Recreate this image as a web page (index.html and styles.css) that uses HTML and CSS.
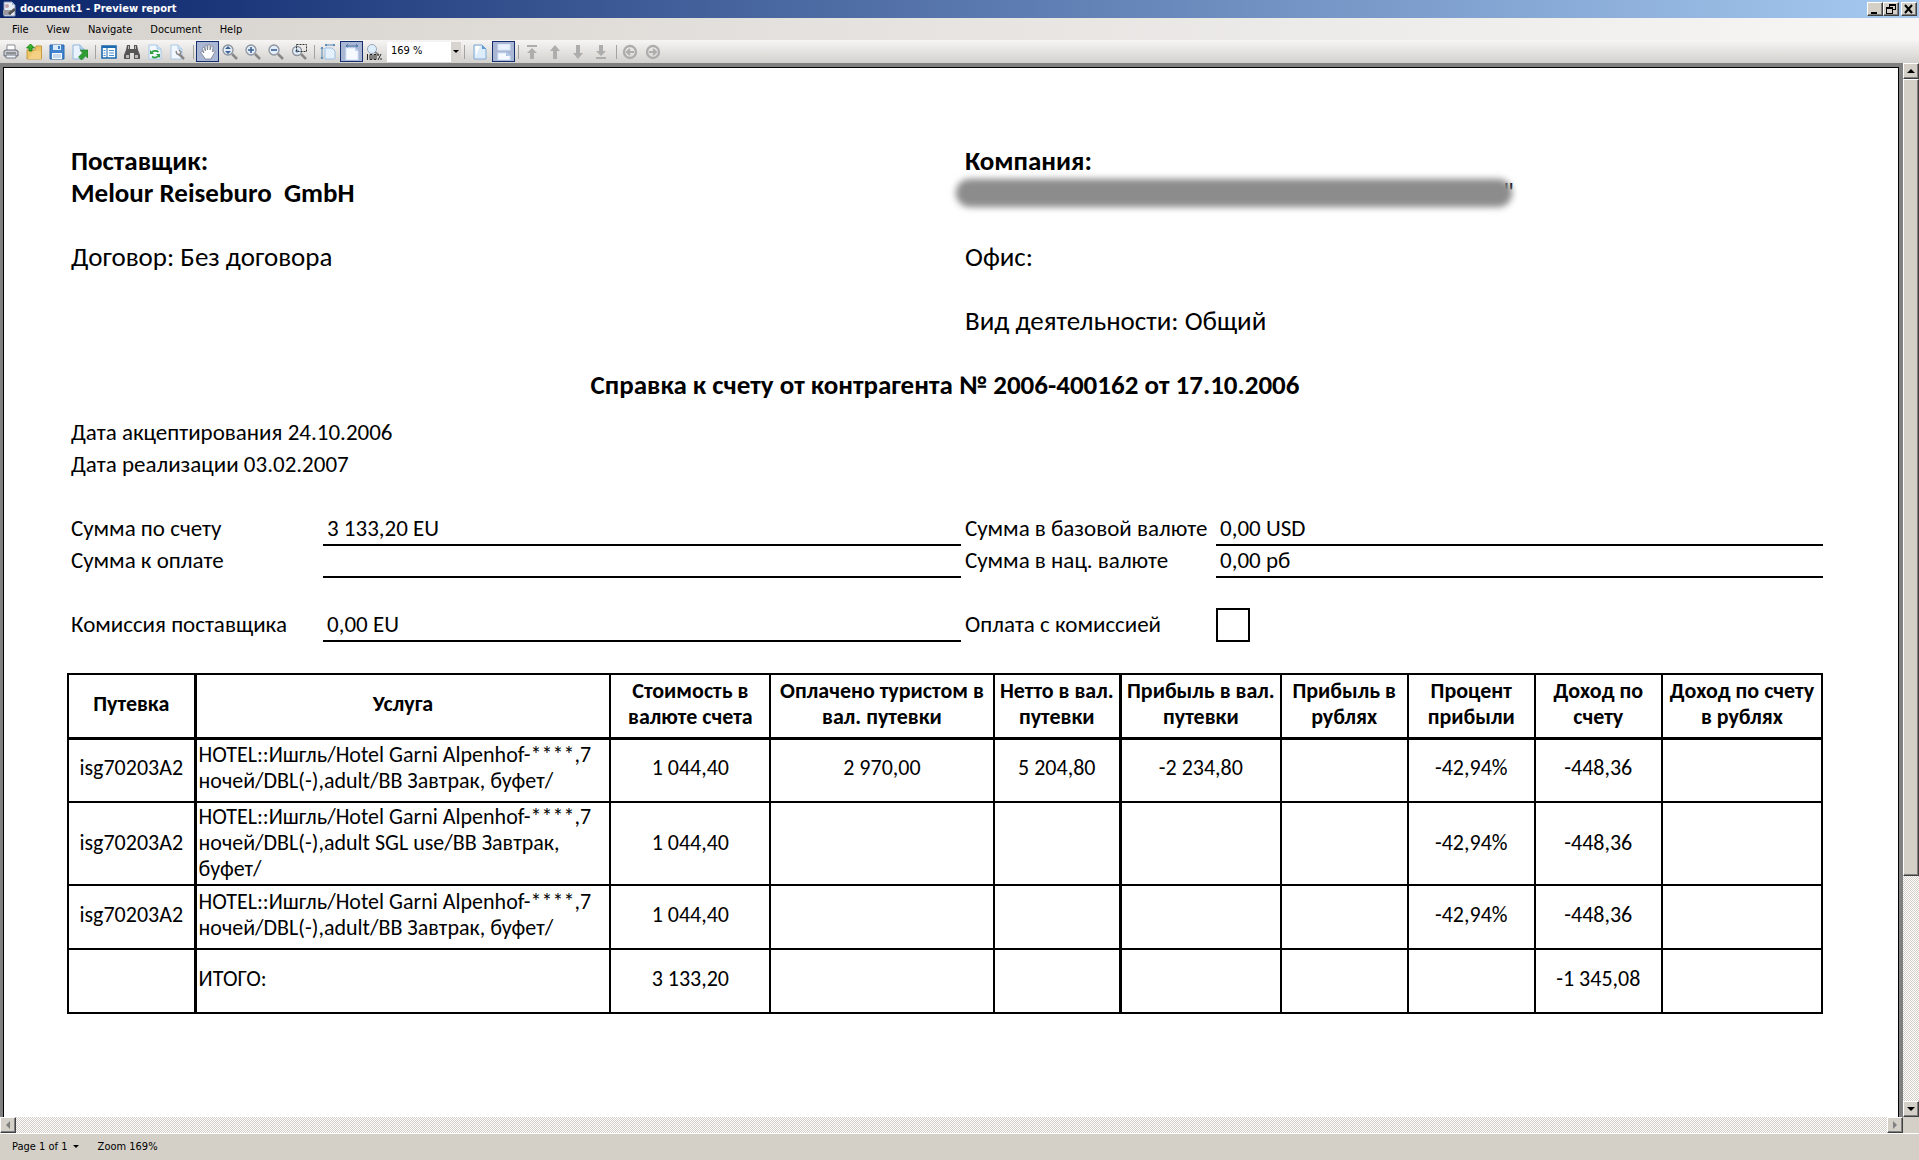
FILE: index.html
```html
<!DOCTYPE html>
<html lang="ru">
<head>
<meta charset="utf-8">
<title>document1 - Preview report</title>
<link rel="stylesheet" href="styles.css">
</head>
<body>
<header class="titlebar">
  <svg class="icon" viewBox="0 0 16 16"><path d="M2 1h8l3 3v11H2z" fill="#e8edf5" stroke="#8b98b8"/><path d="M10 1v3h3z" fill="#9fb3d6"/><path d="M1 9h8v5H1z" fill="#9a9aa0"/><path d="M6 12l6-5 2 2-6 5z" fill="#555"/><circle cx="5" cy="5" r="2" fill="#c5a0a8"/></svg>
  <h1 class="titlebar-text">document1 - Preview report</h1>
  <div class="window-buttons">
    <button class="bevel win-btn" aria-label="Minimize"><svg viewBox="0 0 12 10"><path d="M2 8h6v2H2z"/></svg></button>
    <button class="bevel win-btn" aria-label="Restore"><svg viewBox="0 0 12 10"><path d="M4 0h7v6H8v4H1V3h3zM5 2v1h3v2h2V2zM2 5v4h5V5z" fill-rule="evenodd"/></svg></button>
    <button class="bevel win-btn win-close" aria-label="Close"><svg viewBox="0 0 12 10"><path d="M2 1l7 8M9 1L2 9" stroke="#000" stroke-width="2"/></svg></button>
  </div>
</header>
<nav class="menubar">
  <button class="menu">File</button>
  <button class="menu">View</button>
  <button class="menu">Navigate</button>
  <button class="menu">Document</button>
  <button class="menu">Help</button>
</nav>
<div class="toolbar" role="toolbar">
  <button class="tool" aria-label="Print"><svg viewBox="0 0 16 16"><path d="M4 1h8v6H4z" fill="#fff" stroke="#8b8f98"/><path d="M1 7l2-1h10l2 1v5H1z" fill="#c9ccd2" stroke="#666b76"/><path d="M3 11h10v3H3z" fill="#eef1f6" stroke="#777c88"/><path d="M3 9h10" stroke="#555"/></svg></button>
  <button class="tool" aria-label="Open"><svg viewBox="0 0 16 16"><path d="M1 6h8l1-4h5.500v13H1z" fill="#ecc46a" stroke="#c99a3a"/><path d="M2 15L8 7h7v8z" fill="#f3d084"/><path d="M4.500 0l4 4H6v3H3V4H.5z" fill="#35b32a" stroke="#15760f" stroke-width=".8"/></svg></button>
  <button class="tool" aria-label="Save"><svg viewBox="0 0 16 16"><path d="M1 1h14v14H1z" fill="#3f83cf" stroke="#2a67ad"/><path d="M4 1h8v5H4z" fill="#dcebfa"/><path d="M9 2h2v3H9z" fill="#3f83cf"/><path d="M3 9h10v6H3z" fill="#f4f8fd"/><path d="M4 11h8M4 13h8" stroke="#9ab9dc"/></svg></button>
  <button class="tool" aria-label="Export"><svg viewBox="0 0 16 16"><path d="M1 1h7l4 4v10H1z" fill="#eaf3fd" stroke="#8fb6de"/><path d="M8 1v4h4" fill="#bcd7f2" stroke="#8fb6de"/><path d="M16 6v8l-2.500-2-4 4-3-3 4-4-2.500-3z" fill="#2f9e35" stroke="#1b7420" stroke-width=".6"/></svg></button>
  <span class="sep"></span>
  <button class="tool" aria-label="Outline"><svg viewBox="0 0 16 16"><path d="M1 2h14v12H1z" fill="#fff" stroke="#1d6aaf" stroke-width="1.6"/><path d="M1 2h14v2H1z" fill="#1d6aaf"/><path d="M6 3v11" stroke="#1d6aaf"/><path d="M2.500 6.500h2m-2 2.500h2m-2 2.500h2M8 6.500h5M8 9h5m-5 2.500h5" stroke="#4a90d0"/></svg></button>
  <button class="tool" aria-label="Search"><svg viewBox="0 0 16 16"><path d="M3 1h3v4h4V1h3l1 5 2 5v4h-6V9H6v6H0v-4l2-5z" fill="#555"/><path d="M4 2h1v3H4zm7 0h1v3h-1zM2 11h3v3H2zm9 0h3v3h-3z" fill="#bbb"/></svg></button>
  <button class="tool" aria-label="Refresh"><svg viewBox="0 0 16 16"><path d="M2 1h8l4 4v10H2z" fill="#f2f8fe" stroke="#a8c8e6"/><path d="M10 1v4h4" fill="#cfe3f6" stroke="#a8c8e6"/><path d="M4.500 9a4 3 0 0 1 7-1M12 11a4 3 0 0 1-7 1.500" fill="none" stroke="#2da042" stroke-width="1.700"/><path d="M3 6v4h4zm10 8v-4H9z" fill="#2da042"/></svg></button>
  <button class="tool" aria-label="Page settings"><svg viewBox="0 0 16 16"><path d="M1 1h7l4 4v10H1z" fill="#f2f8fe" stroke="#a8c8e6"/><path d="M8 1v4h4" fill="#cfe3f6" stroke="#a8c8e6"/><path d="M9 10l5 5" stroke="#888" stroke-width="2.500"/><path d="M6 7l1 3 3 1 1-3-2-2" fill="none" stroke="#888" stroke-width="1.500"/></svg></button>
  <span class="sep"></span>
  <button class="tool pressed" aria-label="Hand" aria-pressed="true"><svg viewBox="0 0 16 16"><path d="M4 9L2.500 4.500c0-1.500 1.500-1.500 2 0L5.500 7 5 2c0-1.500 2-1.500 2 0l.5 4L8 1.500C8 0 10 0 10 1.500V6l1-3.500c.5-1.500 2-1 2 .5l-.5 5 1-1c1-1 2 0 1.500 1L12 13l-1 2H5l-1-2-3-4c-.5-1.500 1-2 2-1z" fill="#fff" stroke="#777c8c" stroke-width=".8"/></svg></button>
  <button class="tool" aria-label="Dynamic zoom"><svg viewBox="0 0 16 16"><path d="M10 10l5 5" stroke="#888" stroke-width="2.500"/><circle cx="6" cy="6" r="5" fill="#e3edf8" stroke="#8c939e" stroke-width="1.300"/><path d="M6 2l3 3H3zm0 8l3-3H3z" fill="#3d6190"/></svg></button>
  <button class="tool" aria-label="Zoom in"><svg viewBox="0 0 16 16"><path d="M10 10l5 5" stroke="#888" stroke-width="2.500"/><circle cx="6" cy="6" r="5" fill="#e3edf8" stroke="#8c939e" stroke-width="1.300"/><path d="M3 6h6M6 3v6" stroke="#3d6190" stroke-width="1.600"/></svg></button>
  <button class="tool" aria-label="Zoom out"><svg viewBox="0 0 16 16"><path d="M10 10l5 5" stroke="#888" stroke-width="2.500"/><circle cx="6" cy="6" r="5" fill="#e3edf8" stroke="#8c939e" stroke-width="1.300"/><path d="M3 6h6" stroke="#3d6190" stroke-width="1.600"/></svg></button>
  <button class="tool" aria-label="Marquee zoom"><svg viewBox="0 0 16 16"><path d="M10 10l5 5" stroke="#888" stroke-width="2.500"/><circle cx="6" cy="7" r="4.500" fill="#e3edf8" stroke="#8c939e" stroke-width="1.300"/><path d="M4 7h4M6 5v4" stroke="#6d89b0"/><path d="M5.500.5h10v7h-10z" fill="none" stroke="#333" stroke-dasharray="2 1"/></svg></button>
  <span class="sep"></span>
  <button class="tool" aria-label="Whole page"><svg viewBox="0 0 16 16"><path d="M5 4h7l3 3v8H5z" fill="#e4f0fb" stroke="#9dbfe2"/><path d="M2 3v12M5 1h10M1 5l1-2 1 2M1 13l1 2 1-2M7 0L5 1l2 1M13 0l2 1-2 1" fill="none" stroke="#5286b4"/></svg></button>
  <button class="tool pressed" aria-label="Page width" aria-pressed="true"><svg viewBox="0 0 16 16"><path d="M2 4h9l3 3v9H2z" fill="#f6faff" stroke="#d3e3f5"/><path d="M11 4v3h3z" fill="#bcd3ee"/><path d="M2 2h12M4 0L2 2l2 1M12 0l2 2-2 1" fill="none" stroke="#4a72a8"/></svg></button>
  <button class="tool" aria-label="Actual size"><svg viewBox="0 0 16 16"><circle cx="6" cy="5" r="4.500" fill="#dfeefb" stroke="#97a8ba"/><path d="M9 8l4 3" stroke="#888" stroke-width="2"/><path d="M1.500 10v6M4 10.500h2v5H4zM8 10.500h2v5H8zM15 10l-3 6M12 10v2m3 2v2" fill="none" stroke="#222"/></svg></button>
  <div class="combo"><input class="combo-input" aria-label="Zoom" value="169 %"><button class="combo-arrow" aria-label="Zoom levels"><i class="tri down"></i></button></div>
  <span class="sep wide"></span>
  <button class="tool" aria-label="Single page"><svg viewBox="0 0 16 16"><path d="M2 1h8l4 4v10H2z" fill="#dcecfb" stroke="#7fa9d3"/><path d="M3 2h5L4 12z" fill="#fff"/><path d="M10 1v4h4z" fill="#5f9ad6"/></svg></button>
  <button class="tool pressed" aria-label="Continuous" aria-pressed="true"><svg viewBox="0 0 16 16"><path d="M2 0h12v6H2z" fill="#e9f2fc" stroke="#d3e3f5"/><path d="M2 9h8l4 3v4H2z" fill="#f6faff" stroke="#d3e3f5"/><path d="M10 9v3h4z" fill="#a9c6e8"/></svg></button>
  <span class="sep"></span>
  <button class="tool" disabled aria-label="First page"><svg viewBox="0 0 16 16" fill="#adadad"><path d="M3 1h10v2H3zM8 4l5 5h-3v6H6V9H3z"/></svg></button>
  <button class="tool" disabled aria-label="Previous page"><svg viewBox="0 0 16 16" fill="#adadad"><path d="M8 1l5 6h-3v8H6V7H3z"/></svg></button>
  <button class="tool" disabled aria-label="Next page"><svg viewBox="0 0 16 16" fill="#adadad"><path d="M8 15l5-6h-3V1H6v8H3z"/></svg></button>
  <button class="tool" disabled aria-label="Last page"><svg viewBox="0 0 16 16" fill="#adadad"><path d="M3 13h10v2H3zM8 12l5-5h-3V1H6v6H3z"/></svg></button>
  <span class="sep"></span>
  <button class="tool" disabled aria-label="Back"><svg viewBox="0 0 16 16"><circle cx="8" cy="8" r="6" fill="none" stroke="#adadad" stroke-width="2.400"/><path d="M12 8H5m3-3L5 8l3 3" fill="none" stroke="#adadad" stroke-width="2"/></svg></button>
  <button class="tool" disabled aria-label="Forward"><svg viewBox="0 0 16 16"><circle cx="8" cy="8" r="6" fill="none" stroke="#adadad" stroke-width="2.400"/><path d="M4 8h7M8 5l3 3-3 3" fill="none" stroke="#adadad" stroke-width="2"/></svg></button>
</div>
<div class="viewer">
  <main class="sheet">
    <section class="parties">
      <div class="party">
        <p class="strong">Поставщик:</p>
        <p class="strong">Melour Reiseburo&nbsp; GmbH</p>
        <p class="spaced">Договор: Без договора</p>
      </div>
      <div class="party">
        <p class="strong">Компания:</p>
        <p class="redacted"><span class="redaction"></span>"</p>
        <p class="spaced">Офис:</p>
        <p class="spaced">Вид деятельности: Общий</p>
      </div>
    </section>
    <h2 class="report-title">Справка к счету от контрагента № 2006-400162 от 17.10.2006</h2>
    <section class="dates">
      <p>Дата акцептирования 24.10.2006</p>
      <p>Дата реализации 03.02.2007</p>
    </section>
    <section class="sums totals">
      <span>Сумма по счету</span><span class="value">3 133,20 EU</span>
      <span>Сумма в базовой валюте</span><span class="value">0,00 USD</span>
      <span>Сумма к оплате</span><span class="value"></span>
      <span>Сумма в нац. валюте</span><span class="value">0,00 рб</span>
    </section>
    <section class="sums">
      <span>Комиссия поставщика</span><span class="value">0,00 EU</span>
      <label for="with-fee">Оплата с комиссией</label><input class="check" type="checkbox" id="with-fee">
    </section>
    <table class="services">
      <colgroup><col class="c-md"><col class="c-xl"><col class="c-lg"><col class="c-paid"><col class="c-md"><col class="c-lg"><col class="c-md"><col class="c-md"><col class="c-md"><col class="c-lg"></colgroup>
      <thead>
        <tr><th>Путевка</th><th>Услуга</th><th>Стоимость в валюте счета</th><th>Оплачено туристом в вал. путевки</th><th>Нетто в вал. путевки</th><th>Прибыль в вал. путевки</th><th>Прибыль в рублях</th><th>Процент прибыли</th><th>Доход по счету</th><th>Доход по счету<br>в рублях</th></tr>
      </thead>
      <tbody>
        <tr><td>isg70203A2</td><td class="service">HOTEL::Ишгль/Hotel Garni Alpenhof-****,7<br>ночей/DBL(-),adult/BB Завтрак, буфет/</td><td>1 044,40</td><td>2 970,00</td><td>5 204,80</td><td>-2 234,80</td><td></td><td>-42,94%</td><td>-448,36</td><td></td></tr>
        <tr class="tall"><td>isg70203A2</td><td class="service">HOTEL::Ишгль/Hotel Garni Alpenhof-****,7<br>ночей/DBL(-),adult SGL use/BB Завтрак,<br>буфет/</td><td>1 044,40</td><td></td><td></td><td></td><td></td><td>-42,94%</td><td>-448,36</td><td></td></tr>
        <tr><td>isg70203A2</td><td class="service">HOTEL::Ишгль/Hotel Garni Alpenhof-****,7<br>ночей/DBL(-),adult/BB Завтрак, буфет/</td><td>1 044,40</td><td></td><td></td><td></td><td></td><td>-42,94%</td><td>-448,36</td><td></td></tr>
        <tr><td></td><td class="service">ИТОГО:</td><td>3 133,20</td><td></td><td></td><td></td><td></td><td></td><td>-1 345,08</td><td></td></tr>
      </tbody>
    </table>
  </main>
  <div class="scroll vertical">
    <button class="bevel scroll-btn" aria-label="Scroll up"><i class="tri up"></i></button>
    <div class="track"><div class="bevel thumb"></div></div>
    <button class="bevel scroll-btn" aria-label="Scroll down"><i class="tri down"></i></button>
  </div>
  <div class="scroll horizontal">
    <button class="bevel scroll-btn" disabled aria-label="Scroll left"><i class="tri left"></i></button>
    <div class="track"></div>
    <button class="bevel scroll-btn" disabled aria-label="Scroll right"><i class="tri right"></i></button>
  </div>
</div>
<footer class="statusbar">
  <button class="page-picker">Page 1 of 1 <i class="tri down"></i></button>
  <span>Zoom 169%</span>
</footer>
</body>
</html>
```
FILE: styles.css
```css
* { box-sizing: border-box; }

body {
  margin: 0;
  min-height: 100vh;
  display: flex;
  flex-direction: column;
  background: #d4d0c8;
  color: #000;
  font: 11px/14px Tahoma, "DejaVu Sans Condensed", sans-serif;
}

h1, h2, p { margin: 0; font-size: inherit; }

button {
  margin: 0;
  padding: 0;
  border: 0;
  background: none;
  color: inherit;
  font: inherit;
}

svg { display: block; }

/* Title bar */
.titlebar {
  display: flex;
  align-items: center;
  height: 18px;
  padding: 0 2px;
  background: linear-gradient(90deg, #0a246a, #a6caf0);
  color: #fff;
}
.icon { width: 16px; height: 16px; margin-right: 2px; }
.titlebar-text { flex: 1; font-size: 11px; font-weight: bold; }
.window-buttons { display: flex; }
.bevel {
  background: #d4d0c8;
  border: 1px solid;
  border-color: #fff #404040 #404040 #fff;
  box-shadow: inset -1px -1px #808080;
}
.win-btn { width: 16px; height: 14px; padding: 1px; }
.win-btn svg { width: 12px; height: 10px; }
.win-close { margin-left: 2px; }

/* Menus */
.menubar {
  display: flex;
  align-items: center;
  gap: 18px;
  height: 22px;
  padding: 2px 12px 0;
  background: linear-gradient(90deg, #d6d2cd, #f7f6f5);
}

/* Toolbar */
.toolbar {
  display: flex;
  align-items: center;
  height: 23px;
  background: linear-gradient(#f6f5f3, #d3d1ce);
}
.tool { width: 23px; height: 21px; padding: 2px 3px; }
.tool svg { width: 16px; height: 16px; }
.pressed { background: #a9b6d4; border: 1px solid #16306f; padding: 1px 3px; }
.sep { width: 6px; height: 14px; border-left: 1px solid #a5a3a0; margin-left: 3px; margin-right: -3px; }
.sep.wide { width: 8px; }
.combo { display: flex; width: 74px; height: 20px; margin-left: 1px; background: #fff; }
.combo-input {
  flex: 1;
  min-width: 0;
  border: 0;
  padding: 0 0 2px 4px;
  background: none;
  font: inherit;
}
.combo-arrow { width: 10px; background: #d8d5d0; display: flex; align-items: center; justify-content: center; }

.tri { display: inline-block; width: 0; height: 0; border: 0 solid transparent; }
.tri.down { border-width: 3px 3px 0; border-top-color: #000; }
.tri.up { border-width: 0 3px 3px; border-bottom-color: #000; }
.tri.left { border-width: 4px 4px 4px 0; border-right-color: #808080; }
.tri.right { border-width: 4px 0 4px 4px; border-left-color: #808080; }
.scroll .tri.down { border-width: 4px 4px 0; }
.scroll .tri.up { border-width: 0 4px 4px; }

/* Report viewer */
.viewer {
  flex: 1;
  display: grid;
  grid-template-columns: 1fr 16px;
  grid-template-rows: 1fr 16px;
  border-bottom: 1px solid #fff;
}
.sheet {
  margin: 4px 4px 0 3px;
  padding: 77px 75px 48px 63px;
  border: 1px solid #000;
  border-bottom: 0;
  background: #fff;
  outline: 4px solid #808080;
  clip-path: inset(-4px -4px 0 -3px);
  font: 23px/32px Carlito, Lato, "Noto Sans", sans-serif;
}
.parties { display: grid; grid-template-columns: 894fr 862fr; font-size: 27px; }
.party { padding-left: 4px; }
.strong { font-weight: bold; }
.spaced { margin-top: 32px; }
.redacted {
  display: flex;
  align-items: center;
  height: 32px;
}
.redaction {
  width: 554px;
  height: 26px;
  margin: 0 -8px 0 -8px;
  border-radius: 13px;
  background: #8c8c8c;
  filter: blur(3px);
  box-shadow: 0 0 3px 1px #8c8c8c;
}
.report-title { margin: 32px 0 15px; text-align: center; font-size: 27px; }
.dates { padding-left: 4px; }
.sums {
  display: grid;
  grid-template-columns: 256fr 638fr 255fr 607fr;
  grid-auto-rows: 32px;
  margin-top: 32px;
  line-height: 28px;
}
.sums.totals { margin-top: 34px; }
.sums > * { padding-left: 4px; white-space: nowrap; }
.sums .value { border-bottom: 2px solid #000; }
.sums .check {
  appearance: none;
  width: 34px;
  height: 34px;
  margin: -2px 0 0;
  padding: 0;
  border: 2px solid #000;
  background: #fff;
}
.services {
  width: 100%;
  margin-top: 31px;
  border-collapse: collapse;
  table-layout: fixed;
  border: 2px solid #000;
  font-size: 22px;
  line-height: 26px;
}
.services th, .services td { height: 64px; padding: 0 0 4px; border: 2px solid #000; text-align: center; }
.services .tall td { height: 83px; padding-bottom: 2px; }
.services .service { padding-left: 2px; text-align: left; white-space: nowrap; }
.services th:nth-child(1), .services td:nth-child(1),
.services th:nth-child(5), .services td:nth-child(5) { border-right-width: 3px; }
.services thead { border-bottom: 3px solid #000; }
.c-md { width: 127px; }
.c-lg { width: 160px; }
.c-xl { width: 415px; }
.c-paid { width: 223px; }

/* Scroll bars */
.scroll { display: flex; }
.vertical { flex-direction: column; }
.scroll-btn { width: 16px; height: 16px; display: flex; align-items: center; justify-content: center; }
.track {
  flex: 1;
  background: repeating-conic-gradient(#fff 0 25%, #d4d0c8 0 50%) 0 0 / 2px 2px;
}
.thumb { height: 78%; }

/* Status bar */
.statusbar {
  display: flex;
  align-items: center;
  gap: 19px;
  height: 26px;
  padding: 0 12px;
}
.page-picker .tri { margin: 0 0 2px 2px; }
```
